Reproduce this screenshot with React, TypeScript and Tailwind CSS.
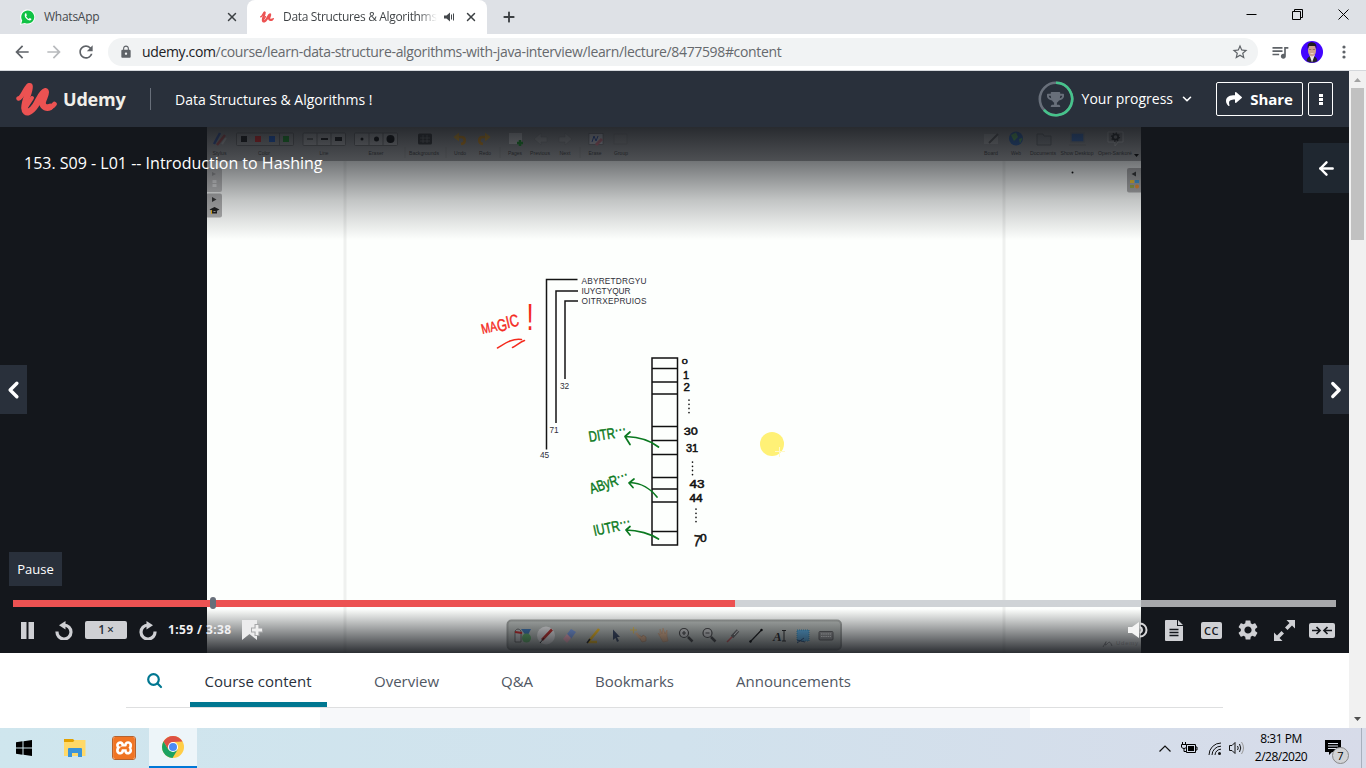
import React from "react";
import { FaTrophy, FaShare } from "react-icons/fa";
import { SiXampp } from "react-icons/si";
import { MdArrowBack, MdArrowForward, MdRefresh, MdQueueMusic, MdSettings, MdStarBorder, MdLock } from "react-icons/md";
import { X, Plus, ChevronDown, ChevronLeft, ChevronRight, ArrowLeft } from "lucide-react";

const ui = "font-['Open_Sans','Noto_Sans',sans-serif]";

function UdemyMark({ className }: { className: string }) {
  return (
    <svg viewBox="0 0 41 34" className={className} fill="none" stroke="#ec5252" strokeLinecap="round" strokeLinejoin="round">
      <path strokeWidth="4.500" d="M2.500 16.500C7 15.500 9 5 13 3.500" />
      <path strokeWidth="6.600" d="M13.500 4.300C14 10 8.500 18 8.500 26C9 33.500 15.500 29.500 19.500 23.500C22.500 19 25.500 10 29.500 9.300C31 12 26.500 17 26.500 21C27 25.500 31 26.500 34 25" />
      <path strokeWidth="4.600" d="M32 25.500C35 25.500 37 24 38.500 22" />
      <path strokeWidth="4" d="M9.500 26L16 16" />
    </svg>
  );
}

function Replay({ className }: { className: string }) {
  return (
    <svg viewBox="0 0 18 19" className={className}>
      <path d="M2 10.500A7 7 0 1 0 9 4" fill="none" stroke="currentColor" strokeWidth="3.200" />
      <path d="M10.500 0V8.500L4 4.200Z" fill="currentColor" />
    </svg>
  );
}

function TabStrip() {
  return (
    <div className="flex h-[34px] bg-[#dee1e6]">
      <div className="flex w-[247px] items-center pl-5">
        <svg viewBox="0 0 16 16" className="size-4 shrink-0">
          <path d="M0 16L1 11.500A7.500 7.500 0 1 1 4.500 14.800Z" fill="#fff" />
          <path d="M1.300 14.700L2.200 11.500A6.500 6.500 0 1 1 4.800 13.900Z" fill="#11c245" />
          <path d="M5.300 4.200C4 6 5 8.500 6.500 9.800C8 11.200 10 12 11.300 10.800L11.300 9.800L9.700 9L8.800 9.900C7.500 9.400 6.600 8.500 6.100 7.300L6.900 6.400L6.200 4.200Z" fill="#fff" />
        </svg>
        <span className="ml-2 text-[12px] leading-4 tracking-[-0.25px] text-[#45494d]">WhatsApp</span>
        <X className="ml-auto mr-2 size-[14px] text-[#3c4043]" strokeWidth={2.5} />
      </div>
      <div className="flex w-[240px] items-center rounded-t-lg bg-white pl-[13px]">
        <UdemyMark className="h-3 w-[14px]" />
        <span className="ml-[9px] w-[154px] whitespace-nowrap bg-linear-to-r from-[#3c4043] from-88% to-transparent bg-clip-text text-[12px] leading-4 tracking-[-0.33px] text-transparent">Data Structures &amp; Algorithms</span>
        <svg viewBox="0 0 12 10" className="ml-[7px] h-[10px] w-3"><path d="M0 3.500H2.500L6 .5V9.500L2.500 6.500H0Z" fill="#45494d" /><path d="M7.500 2.500V7.500M9.500 1.500V8.500" stroke="#45494d" /></svg>
        <X className="ml-2 size-[14px] text-[#3c4043]" strokeWidth={2.5} />
      </div>
      <Plus className="ml-[14px] mt-[9px] size-4 text-[#3c4043]" strokeWidth={2.8} />
      <div className="ml-auto flex items-center gap-[35px] pb-[6px] pr-[17px]">
        <svg className="size-[11px]" viewBox="0 0 11 11"><path d="M0.500 5.500H10.500" stroke="#000" /></svg>
        <svg className="size-[11px]" viewBox="0 0 11 11" fill="none" stroke="#000"><path d="M.5 2.500H8.500V10.500H.5ZM2.500 2.500V.5H10.500V8.500H8.500" /></svg>
        <svg className="size-[11px]" viewBox="0 0 11 11" stroke="#000"><path d="M.5.5L10.500 10.500M10.500.5L.5 10.500" /></svg>
      </div>
    </div>
  );
}

function AddressBar() {
  return (
    <div className="flex h-[37px] items-center border-b border-[#d5d8dc] bg-white pl-3 text-[#5f6368]">
      <MdArrowBack className="size-5" />
      <MdArrowForward className="ml-3 size-5 text-[#b8babd]" />
      <MdRefresh className="ml-3 size-5" />
      <div className="ml-3 flex h-7 w-[1150px] items-center rounded-full bg-[#f1f3f4] pl-[11px] pr-[9px]">
        <MdLock className="size-[14px]" />
        <span className="ml-[9px] whitespace-nowrap text-[14px] leading-5 tracking-[-0.35px] text-[#66696d]"><span className="text-[#202124]">udemy.com</span>/course/learn-data-structure-algorithms-with-java-interview/learn/lecture/8477598#content</span>
        <MdStarBorder className="ml-auto size-[18px]" />
      </div>
      <MdQueueMusic className="ml-3 size-5" />
      <svg viewBox="0 0 22 22" className="ml-[11px] size-[22px]">
        <circle cx="11" cy="11" r="11" fill="#4304ff" />
        <path d="M5.500 20C6 16.500 8 15 11 15S16 16.500 16.500 20A11 11 0 0 1 5.500 20Z" fill="#24222b" />
        <path d="M8.500 14L11 21.500L13.800 14Z" fill="#f3e9e8" />
        <ellipse cx="11" cy="9.500" rx="4" ry="6" fill="#cfa48e" />
        <path d="M6.800 8C6 3 8 1 11 1.300S16 3 15.300 8L14.300 5H8Z" fill="#201d20" />
        <path d="M8 8.500H10.300M11.700 8.500H14" stroke="#8a6654" strokeWidth=".8" />
        <path d="M9.500 12.500H12.500" stroke="#f7dfd8" strokeWidth=".8" />
      </svg>
      <svg viewBox="0 0 4 14" className="ml-[19px] h-[14px] w-1" fill="#5f6368"><circle cx="2" cy="2" r="1.600" /><circle cx="2" cy="7" r="1.600" /><circle cx="2" cy="12" r="1.600" /></svg>
    </div>
  );
}

function CourseHeader() {
  return (
    <header className="flex h-14 items-center bg-[#29303b] pl-4 pr-4 text-white">
      <UdemyMark className="h-[34px] w-[41px]" />
      <span className="ml-[6px] w-[64px] text-[18px] font-bold leading-6 tracking-[-0.2px] text-[#f1efe9]">Udemy</span>
      <div className="ml-[23px] h-[22px] w-px bg-[#686f7a]" />
      <span className="ml-6 pt-[2px] text-[14px] leading-5">Data Structures &amp; Algorithms !</span>
      <div className="ml-auto flex items-center">
        <div className="relative flex size-[36px] items-center justify-center">
          <svg viewBox="0 0 36 36" className="absolute inset-0" fill="none" strokeWidth="2.600">
            <circle cx="18" cy="18" r="16.200" stroke="#686f7a" />
            <path d="M18 1.800A16.200 16.200 0 1 1 5.900 28.800" stroke="#46c38b" />
          </svg>
          <FaTrophy className="size-[17px] text-[#686f7a]" />
        </div>
        <span className="ml-[8px] whitespace-nowrap text-[14px] leading-5">Your progress</span>
        <ChevronDown className="ml-[7px] size-[14px]" strokeWidth={2.800} />
        <div className="ml-[22px] flex h-[34px] w-[87px] items-center justify-center gap-2 rounded-[2px] border border-white text-[15px] font-bold tracking-[-0.1px]">
          <FaShare className="size-4" />Share
        </div>
        <div className="ml-[5px] flex h-[34px] w-[25px] flex-col items-center justify-center gap-px rounded-[2px] border border-white">
          <i className="h-[3px] w-1 bg-white" /><i className="h-[3px] w-1 bg-white" /><i className="h-[3px] w-1 bg-white" />
        </div>
      </div>
    </header>
  );
}

const rows = [368.5, 382, 394, 426.5, 440.5, 454.5, 477.5, 489, 502, 531.5];
const labels: [number, string, number][] = [[219.5, "Stylus", 14], [264, "Color", 12], [324, "Line", 9], [376, "Eraser", 15], [424, "Backgrounds", 30], [460, "Undo", 12], [485, "Redo", 12], [515, "Pages", 14], [540, "Previous", 20], [565, "Next", 11], [595, "Erase", 13], [621, "Group", 14], [991, "Board", 14], [1016, "Web", 10], [1043, "Documents", 26], [1077, "Show Desktop", 33], [1115, "Open-Sankoré", 34]];

function Whiteboard() {
  return (
    <svg viewBox="207 127 934 526" className="h-[526px] w-[934px] shrink-0 font-['Liberation_Sans',sans-serif]">
      <defs>
        <linearGradient id="top" x1="0" x2="0" y1="0" y2="1"><stop offset="0" stopColor="#14171c" stopOpacity=".86" /><stop offset=".3" stopColor="#14171c" stopOpacity=".6" /><stop offset=".65" stopColor="#14171c" stopOpacity=".25" /><stop offset="1" stopColor="#14171c" stopOpacity="0" /></linearGradient>
        <linearGradient id="bottom" x1="0" x2="0" y1="0" y2="1"><stop offset="0" stopColor="#14171c" stopOpacity="0" /><stop offset="1" stopColor="#14171c" stopOpacity=".9" /></linearGradient>
      </defs>
      <rect x="207" y="127" width="934" height="526" fill="#fdfffd" />
      <path d="M345 161V653M1004 161V653" stroke="#eff1ef" strokeWidth="3" />
      <rect x="207" y="127" width="934" height="34" fill="#a4a5a6" />

      <g fontSize="6" textAnchor="middle" fill="#383838">{labels.map(([x, t, w]) => <text key={t} x={x} y="155" textLength={w} lengthAdjust="spacingAndGlyphs">{t}</text>)}</g>
      <g stroke="#666" strokeWidth=".8">
        <rect x="236.500" y="133" width="57" height="12.500" fill="#b0b0b0" rx="1" /><path d="M279.500 133V145" />
        <rect x="303" y="133" width="42.500" height="12.500" fill="#c4c4c4" rx="1" /><path d="M317 133V145M331 133V145" />
        <rect x="354.500" y="133" width="43" height="12.500" fill="#c4c4c4" rx="1" /><path d="M369 133V145M383 133V145" />
      </g>
      <rect x="241" y="136" width="6" height="6" fill="#111" /><rect x="255" y="136" width="6" height="6" fill="#ff2020" /><rect x="269" y="136" width="6" height="6" fill="#1565f0" /><rect x="283" y="136" width="6" height="6" fill="#10a820" />
      <path d="M307 139H313" stroke="#111" /><path d="M321 139H328" stroke="#111" strokeWidth="2" /><path d="M335 139H342" stroke="#111" strokeWidth="4" />
      <circle cx="362" cy="139" r="1.500" /><circle cx="376.500" cy="139" r="2.500" /><circle cx="390.500" cy="139" r="4" />
      <path d="M214 144L220 133" stroke="#3458b0" strokeWidth="2.500" /><path d="M217 145L225 135" stroke="#c05050" strokeWidth="2.500" /><path d="M222 144L226 138" stroke="#d0d0d0" strokeWidth="2" />
      <rect x="418" y="133.500" width="14" height="11" rx="1.500" fill="#333" /><path d="M420 138H430M420 141H430M423 135V143M427 135V143" stroke="#888" strokeWidth=".7" />
      <g fill="none" stroke="#f5a010" strokeWidth="2.600"><path d="M456 137H461C466 137 466 143 461 144" /><path d="M488 137H483C478 137 478 143 483 144" /></g>
      <path d="M453.500 137L459 132.500V141.500ZM490.500 137L485 132.500V141.500Z" fill="#ffb820" />
      <rect x="509" y="133" width="13" height="11" fill="#ececec" /><path d="M517 143H523M520 140V146" stroke="#10a820" strokeWidth="2.500" />
      <path d="M534 139L541 133V137H547V142H541V145ZM572 139L565 133V137H559V142H565V145Z" fill="#bdbdbd" stroke="#8b8b8b" strokeWidth=".5" />
      <rect x="589" y="133.500" width="14" height="11" fill="#e6e6ee" stroke="#666" strokeWidth=".6" /><path d="M592 142L594 136L596 141L598 136" stroke="#2850c0" fill="none" /><path d="M596 145L602 139" stroke="#f08090" strokeWidth="3" />
      <rect x="614" y="134" width="13" height="10" fill="#aaa" stroke="#888" strokeWidth=".6" />
      <path d="M405 147V158M446 147V158M500 147V158M580 147V158" stroke="#8b8b8b" strokeWidth=".6" />
      <rect x="984" y="134" width="14" height="10" fill="#c5c5c5" /><path d="M989 143L998 134" stroke="#666" strokeWidth="2" />
      <circle cx="1016" cy="138.500" r="7" fill="#2a69c4" /><path d="M1011 135L1016 132.500L1018 137L1014 141ZM1019 139L1022.500 138L1020 143.500Z" fill="#63c96a" />
      <path d="M1037 134H1043L1044 136H1051V145H1037Z" fill="#9a9da0" stroke="#6d7073" />
      <rect x="1071" y="133" width="13" height="9" fill="#3978d8" stroke="#92979f" strokeWidth="1.400" /><path d="M1069 145H1086" stroke="#999" strokeWidth="2" />
      <path d="M1108 132H1123V142H1118L1115 146V142H1108Z" fill="#909090" stroke="#d8d8d8" strokeWidth="1" /><circle cx="1115.500" cy="137" r="2.700" fill="none" stroke="#222" strokeWidth="1.800" /><circle cx="1115.500" cy="137" r="4" fill="none" stroke="#222" strokeWidth="1.300" strokeDasharray="1.300 1.800" /><path d="M1134 154H1139L1136.500 157Z" />

      <rect x="206" y="168" width="16" height="24" rx="2" fill="#c3c3c3" /><path d="M212 172L216 174L212 176Z" fill="#999" /><path d="M214.500 180V187" stroke="#e8e8e8" strokeWidth="4" strokeDasharray="3 1" />
      <rect x="206" y="193.500" width="16" height="24" rx="2" fill="#b2b2b2" /><path d="M212 197L216.500 199.500L212 202Z" fill="#333" /><path d="M209.500 209.500L214.500 207L219.500 209.500L214.500 212ZM212 211V213.500H217V211Z" fill="#1d1d1d" /><path d="M211.500 210V214" stroke="#efb515" />
      <rect x="1127" y="168" width="16" height="24.500" rx="2" fill="#afafaf" /><path d="M1136 171.500L1131.500 174L1136 176.500Z" fill="#333" />
      <path d="M1130 180H1134V183H1130Z" fill="#ffd030" /><path d="M1135 180H1139V183H1135Z" fill="#41a8eb" /><path d="M1130 185H1134V188H1130Z" fill="#a6b747" /><circle cx="1137" cy="186.500" r="2" fill="#ff952b" />
      <circle cx="1072.500" cy="172.500" r="1" />

      <g fill="none" stroke="#151515" strokeWidth="1.500"><path d="M577.500 279.500H546.500V449.500" /><path d="M578 291H556V423" /><path d="M578 301H565V379" /></g>
      <g fontSize="8.300" fill="#30303a"><text x="581.500" y="284" textLength="65">ABYRETDRGYU</text><text x="581.500" y="294" textLength="49">IUYGTYQUR</text><text x="581.500" y="304" textLength="65">OITRXEPRUIOS</text><text x="560" y="389.300">32</text><text x="549.500" y="433">71</text><text x="540" y="457.800">45</text></g>
      <g fill="none" stroke="#111" strokeWidth="1.500"><rect x="652" y="358" width="25.500" height="187" />{rows.map((y) => <path key={y} d={`M652 ${y}H677.500`} />)}</g>

      <g fill="#f42b1d" stroke="#f42b1d" strokeWidth=".45">
        <text transform="translate(482.500 334) rotate(-13) scale(.74 1)" fontSize="17"><tspan fontSize="14" letterSpacing=".3">MA</tspan><tspan dy="1.500">G</tspan><tspan dy="-1.500">I</tspan><tspan>C</tspan></text>
        <text transform="translate(526.500 329.500) scale(.7 1)" fontSize="37" strokeWidth="0">!</text>
        <path d="M497.500 348C503 345 511 338 521.500 339.500M512.500 347.500C517 345.500 520 342 524.500 340.500" fill="none" strokeWidth="1.500" strokeLinecap="round" />
      </g>
      <g fill="#0b7920" stroke="#0b7920" strokeWidth=".45" fontSize="15">
        <text transform="translate(589.500 442) rotate(-9) scale(.76 1)">DITR<tspan dy="-3">···</tspan></text>
        <text transform="translate(591.500 494) rotate(-19) scale(.76 1)">AByR<tspan dy="-3">···</tspan></text>
        <text transform="translate(594.500 536) rotate(-12) scale(.76 1)">IUTR<tspan dy="-3">···</tspan></text>
        <g fill="none" strokeWidth="1.700" strokeLinecap="round" strokeLinejoin="round">
          <path d="M658.500 447C650 440 638 437 626 436.500M630 432L625 436.500L630 444.500" />
          <path d="M657 497C651 489 641 483 630 482.500M634 479L629 483L633 487.500" />
          <path d="M658.500 539C651 534 638 530 626 530M630 526.500L626 530L630 535" />
        </g>
      </g>
      <g fill="#111" stroke="#111" strokeWidth=".5" fontSize="10">
        <text transform="translate(681.700 364) scale(1.200 .75)" fontSize="9">0</text><text x="683" y="379" fontSize="11">1</text><text transform="translate(683.500 391) scale(1.150 1)">2</text>
        <text transform="translate(684 435) rotate(-3) scale(1.250 1)">30</text><text transform="translate(686 451.500) scale(1.100 1)">31</text><text transform="translate(689.500 487.500) scale(1.350 1)">43</text><text transform="translate(689.500 502) scale(1.180 1)">44</text>
        <text transform="translate(693 546) rotate(5) scale(.85 1)" fontSize="16">7</text><text transform="translate(700 542) scale(1.200 1)">0</text>
      </g>
      <g stroke="#111" strokeWidth="1.600" strokeLinecap="round" strokeDasharray=".2 4"><path d="M689 400V416" /><path d="M692.500 462V475" /><path d="M696 509V524" /></g>
      <circle cx="772" cy="444" r="12" fill="#fff176" /><path d="M775 451.500H785M779.500 447V457" stroke="#fff9c9" />

      <rect x="507.500" y="620.500" width="333.500" height="29" rx="4" fill="#bfc3bf" stroke="#a2a5a2" strokeWidth="2" />
      <path d="M515 642V631Q518 627 521 631V642Z" fill="#ccc" stroke="#555" strokeWidth=".8" /><path d="M515 632L522 633" stroke="#c22" strokeWidth="2" /><path d="M521 629H531L527 637Z" fill="#3c77b8" /><circle cx="526.500" cy="638" r="4.500" fill="#61b568" />
      <circle cx="546" cy="635.500" r="9" fill="#f0f0f0" /><path d="M542 640L552 629.500" stroke="#c22823" strokeWidth="2.600" /><path d="M540 643L544 638" stroke="#222" />
      <path d="M567 634L571 629L576 632L571 639Z" fill="#7ca1ee" /><path d="M563 639L567 634L571 638L567 643Z" fill="#ffb3c6" />
      <path d="M588 642H597M589 641L599 629" stroke="#f5bd1c" strokeWidth="2.600" /><path d="M587 643L590 639" stroke="#222" strokeWidth="1.500" />
      <path d="M613 629.500V640L615.500 638L617 642L619 641L617 637H620Z" fill="#364461" />
      <path d="M637 634L642 637L643 635L646 637V641L642 642Z" fill="#e9b890" stroke="#af7e59" strokeWidth=".5" /><path d="M636 633L640 638" stroke="#e9b890" strokeWidth="2.500" /><path d="M630 630H637M633.500 627V633.500" stroke="#e9c65a" strokeWidth="1.200" />
      <path d="M658 633L660 635V629L662 634L663 628L665 634L667 630L667 636L668 641L663 642Z" fill="#e9b890" stroke="#cf9e79" strokeWidth=".6" />
      <g fill="none" stroke="#444" strokeWidth="1.200"><circle cx="684" cy="633" r="4.500" fill="#ccc" /><circle cx="707.500" cy="633" r="4.500" fill="#ccc" /><path d="M682 633H686M684 631V635M705.500 633H709.500" /><path strokeWidth="2.500" d="M688 637L692.500 641.500M711 637L715.500 641.500" /></g>
      <path d="M727 642L733 636" stroke="#ce5757" strokeWidth="1.600" /><path d="M732 637L738 630.500" stroke="#676767" strokeWidth="3.400" /><path d="M734 635L738 630.500" stroke="#eee" />
      <path d="M750 642L762 629.500" stroke="#111" strokeWidth="1.200" /><circle cx="750.500" cy="641.500" r="1.200" /><circle cx="761.500" cy="630" r="1.200" />
      <text x="773" y="640.500" fontSize="13" fontWeight="bold" fontStyle="italic" className="font-['Liberation_Serif',serif]" fill="#222">A</text><path d="M782 630.500H786M784 630.500V641M782 641H786" stroke="#222" />
      <rect x="797" y="630" width="12" height="11" fill="#5db2ea" stroke="#3491bc" strokeDasharray="1 1" /><path d="M797 640L805 642M797 643L804 638" stroke="#294f80" />
      <rect x="819" y="631.500" width="14" height="8.500" rx="1" fill="#999" stroke="#606060" /><path d="M821 634H831M821 636.500H831" stroke="#eee" strokeDasharray="1.500 .7" />
      <path d="M1103 647C1106 642 1107 639 1105 645C1108 645 1109 638 1112 646" fill="none" stroke="#999" /><text x="1116" y="645" fontSize="6" fill="#bbb" textLength="22">Udemy</text>

      <rect x="207" y="127" width="934" height="113" fill="url(#top)" />
      <rect x="207" y="609" width="934" height="44" fill="url(#bottom)" />
    </svg>
  );
}

function Controls() {
  return (
    <div className="absolute inset-x-0 bottom-0 h-[56px] px-[13px]">
      <div className="relative mt-[3px] flex h-[7px] w-[1323px] bg-linear-to-r from-[#cfd3d6] from-[1128px] to-[#a7a8ab] to-[1128px]">
        <div className="w-[722px] bg-[#ec5252]" />
        <i className="absolute -top-[3px] left-[197px] h-3 w-[6px] rounded-[3px] bg-[#686f7a]" />
      </div>
      <div className="mt-[9px] flex h-[28px] w-[1323px] items-center pl-2 text-[#cfd0d4]">
        <svg viewBox="0 0 13 17" className="h-[17px] w-[13px]" fill="currentColor"><path d="M0 0H5.500V17H0ZM7.500 0H13V17H7.500Z" /></svg>
        <Replay className="ml-[21px] h-[19px] w-[18px]" />
        <div className="ml-[12px] flex h-[18px] w-[42px] items-center justify-center rounded-[2px] bg-[#cfd0d4] text-[12px] font-semibold text-[#29303b]">1<span className="ml-0.5">×</span></div>
        <Replay className="ml-[12px] h-[19px] w-[18px] -scale-x-100" />
        <span className="ml-[11px] w-[65px] whitespace-nowrap text-[12px] font-bold leading-4 tracking-[0.4px] text-[#f0f0f2]">1:59 / 3:38</span>
        <svg viewBox="0 0 22 20" className="ml-[8px] h-5 w-[22px]"><path d="M1 0H16V20L8.500 14L1 20Z" fill="#ececed" /><path d="M16 4V16M10 10H22" stroke="#a7a8aa" strokeWidth="5" /><path d="M16 5V15M11 10H21" stroke="#f0f0f0" strokeWidth="2.800" /></svg>
        <div className="ml-auto mr-[1px] flex items-center">
          <svg viewBox="0 0 20 16" className="h-4 w-5"><path d="M0 5H4L11 0V16L4 11H0Z" fill="#f4f4f4" /><path d="M12 1.500A6.500 6.500 0 0 1 12 14.500M12 5A3.200 3.200 0 0 1 12 11" fill="none" stroke="#d6d6d8" strokeWidth="2" /></svg>
          <svg viewBox="0 0 18 21" className="ml-[17px] h-[21px] w-[18px]"><path d="M1 0H12V6H18V20Q18 21 17 21H1Q0 21 0 20V1Q0 0 1 0ZM13 0L18 5H13Z" fill="currentColor" /><path d="M4.500 9.500H13.500M4.500 12.500H13.500M4.500 15.500H13.500" stroke="#14171c" strokeWidth="1.300" /></svg>
          <div className="ml-[18px] flex h-[17px] w-[21px] items-center justify-center rounded-[2px] bg-[#cfd0d4] text-[11px] font-semibold leading-none tracking-[0.5px] text-[#14171c]">CC</div>
          <MdSettings className="ml-[14px] size-6" />
          <svg viewBox="0 0 21 21" className="ml-[14px] size-[21px]" fill="currentColor"><path d="M12.500 0H21V8.500L18 5.500L13.500 10L11 7.500L15.500 3ZM8.500 21H0V12.500L3 15.500L7.500 11L10 13.500L5.500 18Z" /></svg>
          <svg viewBox="0 0 26 15" className="ml-[14px] h-[15px] w-[26px]"><rect width="26" height="15" rx="2" fill="currentColor" /><path d="M3 7.500H11M7.500 4L11 7.500L7.500 11M23 7.500H15M18.500 4L15 7.500L18.500 11" fill="none" stroke="#14171c" strokeWidth="1.700" /></svg>
        </div>
      </div>
    </div>
  );
}

function Player() {
  return (
    <section className="relative flex h-[526px] bg-[#14171c] pl-[207px] text-white">
      <Whiteboard />
      <h1 className="absolute left-6 top-[24px] whitespace-nowrap text-[16px] leading-6">153. S09 - L01 -- Introduction to Hashing</h1>
      <button className="absolute right-0 top-4 flex h-[50px] w-[46px] items-center justify-center bg-[#1f2730]"><ArrowLeft className="size-[21px]" strokeWidth={2.800} /></button>
      <button className="absolute left-0 top-[238px] flex h-[49px] w-[27px] items-center justify-center bg-[#29303b]"><ChevronLeft className="size-7" strokeWidth={3} /></button>
      <button className="absolute right-0 top-[238px] flex h-[49px] w-[26px] items-center justify-center bg-[#29303b]"><ChevronRight className="size-7" strokeWidth={3} /></button>
      <div className="absolute left-[9px] top-[425px] flex h-[34px] w-[53px] items-center justify-center bg-[#29303b] pt-px text-[13px]">Pause</div>
      <Controls />
    </section>
  );
}

function CourseTabs() {
  return (
    <section className="h-[75px] overflow-hidden bg-white px-[126px]">
      <nav className="flex h-[55px] border-b border-[#dedfe0] text-[15px] leading-[57px] text-[#505763]">
        <svg viewBox="0 0 16 16" className="ml-[21px] mt-5 size-4" fill="none" stroke="#007791" strokeWidth="2.200" strokeLinecap="round"><circle cx="6.500" cy="6.500" r="5.300" /><path d="M10.800 10.800L14 14" /></svg>
        <div className="ml-[27px] flex h-[54px] w-[137px] justify-center whitespace-nowrap border-b-[5px] border-[#007791] pr-px text-[#29303b]">Course content</div>
        <span className="ml-[47px] w-[127px]">Overview</span>
        <span className="w-[94px]">Q&amp;A</span>
        <span className="w-[141px]">Bookmarks</span>
        <span>Announcements</span>
      </nav>
      <div className="ml-[194px] h-5 w-[710px] bg-[#f7f8fa]" />
    </section>
  );
}

function Taskbar() {
  return (
    <footer className="flex h-10 items-center bg-linear-to-r from-[#cfe6ee] via-[#d1e2ed] via-50% to-[#d7dbe9] text-black">
      <svg viewBox="0 0 16 16" className="ml-4 size-4"><path d="M0 2.200L6.500 1.300V7.500H0ZM7.500 1.150L16 0V7.500H7.500ZM0 8.500H6.500V14.700L0 13.800ZM7.500 8.500H16V16L7.500 14.850Z" /></svg>
      <svg viewBox="0 0 22 20" className="ml-8 h-5 w-[22px]"><path d="M0 1H9L11 3V5H0Z" fill="#e3a100" /><path d="M0 4H9L11 2H21.500V18H0Z" fill="#ffd968" /><path d="M4 11Q4 10 5 10H17Q18 10 18 11V19H14V15H8V19H4Z" fill="#3b94d8" /></svg>
      <div className="ml-[26px] flex size-6 items-center justify-center rounded-[3px] border border-[#b5622e] bg-white"><SiXampp className="size-[22px] text-[#f07423]" /></div>
      <div className="ml-[13px] flex h-10 w-12 items-center justify-center border-b-2 border-[#0078d7] bg-[#edf5f9]">
        <svg viewBox="0 0 22 22" className="size-[22px]">
          <circle cx="11" cy="11" r="11" fill="#ffcd46" />
          <path d="M1.500 5.500A11 11 0 0 1 20.500 5.500L11 6L6.300 13.500Z" fill="#dd5144" />
          <path d="M1.500 5.500A11 11 0 0 0 10.500 22L15.700 13.500H6.300Z" fill="#1ba261" />
          <circle cx="11" cy="11" r="5.100" fill="#fff" /><circle cx="11" cy="11" r="4" fill="#4c8bf5" />
        </svg>
      </div>
      <div className="ml-auto flex h-full items-center">
        <svg viewBox="0 0 12 7" className="h-[7px] w-3" fill="none" stroke="#111" strokeWidth="1.200"><path d="M.5 6.500L6 1L11.500 6.500" /></svg>
        <svg viewBox="0 0 17 12" className="ml-[10px] h-3 w-[17px]"><path d="M5.500 2.500H14.500V10.500H5.500ZM14.500 5H16V8H14.500" fill="none" stroke="#000" /><path d="M7 4H13V9H7Z" /><path d="M1.500 0V3M4.500 0V3M.5 2.500H5.500V5Q5 6.500 3 6.500Q1 6.500 .5 5ZM3 6.500V9.500H5.500" fill="#d5dceb" stroke="#000" /></svg>
        <svg viewBox="0 0 14 13" className="ml-[10px] h-[13px] w-[14px]" fill="none" stroke="#111"><path d="M1 13A12 12 0 0 1 13 1M4 13A9 9 0 0 1 13 4.200M7 13A6 6 0 0 1 13 7.200" /><circle cx="11.500" cy="11.500" r="1.500" fill="#111" stroke="none" /></svg>
        <svg viewBox="0 0 16 14" className="ml-[7px] h-[14px] w-4" fill="none" stroke="#111"><path d="M.5 4.500H3L6 1.500V12.500L3 9.500H.5ZM8.500 5Q10 7 8.500 9M10.500 3Q13 7 10.500 11" /><path d="M12.500 1Q16.500 7 12.500 13" stroke="#999" /></svg>
        <div className="ml-[9px] w-[54px] text-center text-[12px] leading-[18px] tracking-[-0.500px]"><div>8:31 PM</div><div>2/28/2020</div></div>
        <div className="relative ml-[17px] size-4">
          <svg viewBox="0 0 16 16" className="size-4"><path d="M0 0H16V12H7L4 15V12H0Z" /><path d="M3 3.500H13M3 6H13M3 8.500H13" stroke="#dde2ec" /></svg>
          <span className="absolute left-[7px] top-[7px] flex size-[17px] items-center justify-center rounded-full border border-[#888] bg-[#d2d3d6] text-[11px] leading-none">7</span>
        </div>
        <div className="ml-[20px] mr-[4px] h-full w-px bg-[#a8b0bd]" />
      </div>
    </footer>
  );
}

export default function App() {
  return (
    <div className={`${ui} flex h-[768px] w-[1366px] flex-col overflow-hidden bg-white`}>
      <TabStrip />
      <AddressBar />
      <div className="flex h-[657px]">
        <main className="w-[1349px]">
          <CourseHeader />
          <Player />
          <CourseTabs />
        </main>
        <aside className="flex w-[17px] flex-col items-center bg-[#f1f1f1]">
          <svg viewBox="0 0 17 17" className="size-[17px]"><path d="M5 11H12L8.500 7Z" fill="#a3a3a3" /></svg>
          <div className="h-[152px] w-[13px] bg-[#c1c1c1]" />
          <svg viewBox="0 0 17 17" className="mt-auto size-[17px]"><path d="M5 6H12L8.500 10Z" fill="#505050" /></svg>
        </aside>
      </div>
      <Taskbar />
    </div>
  );
}
